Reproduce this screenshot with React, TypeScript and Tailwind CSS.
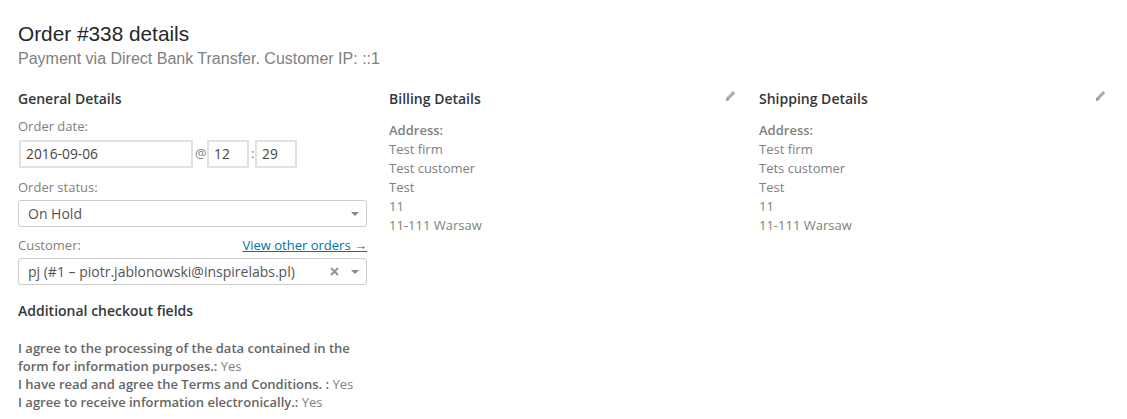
const openSans = 'font-["Open_Sans",sans-serif]'

function Caret() {
  return <span className="h-0 w-0 border-x-[4px] border-t-[4px] border-x-transparent border-t-[#888]" />
}

function ClearIcon() {
  return (
    <svg width="9" height="9" viewBox="0 0 9 9" className="mr-[12px]">
      <path d="M1 1 8 8M8 1 1 8" stroke="#999" strokeWidth="2.2" />
    </svg>
  )
}

function Pencil() {
  return (
    <svg width="11" height="12" viewBox="0 0 11 12" className="mt-[-5px]">
      <path d="M7.8 1 10.2 3.2 3.8 10 0.8 11 1.4 7.8Z" fill="#9a9a9a" />
      <path d="M2.6 7.6 8 2.1M4 9 9.2 3.5" stroke="#e8e8e8" strokeWidth="0.7" />
      <path d="M0.8 11 1.4 7.8 3.8 10Z" fill="#b89a78" />
    </svg>
  )
}

function TextInput({ value, className }: { value: string; className: string }) {
  return (
    <div className={`flex h-[28px] items-center border-2 border-[#e2e2e2] pl-[5px] text-[13.8px] text-[#444] ${className}`}>
      {value}
    </div>
  )
}

function SelectBox({ value, clearable }: { value: string; clearable?: boolean }) {
  return (
    <div className="flex h-[27px] items-center rounded-[3px] border border-[#cdcdcd] pl-[9px] pr-[7px] text-[14px] text-[#555]">
      <span className="flex-1">{value}</span>
      {clearable && <ClearIcon />}
      <Caret />
    </div>
  )
}

function AddressColumn({ title, customer }: { title: string; customer: string }) {
  return (
    <div className="pr-[23px]">
      <div className="flex h-[20px] items-center justify-between">
        <h3 className="text-[14px] font-semibold text-[#32373c]">{title}</h3>
        <Pencil />
      </div>
      <div className="mt-[13px] text-[13px] leading-[19px] text-[#808080]">
        <p className="font-semibold">Address:</p>
        <p>Test firm</p>
        <p>{customer}</p>
        <p>Test</p>
        <p>11</p>
        <p>11-111 Warsaw</p>
      </div>
    </div>
  )
}

export default function App() {
  return (
    <div className={`h-[419px] overflow-hidden bg-white pl-[18px] pt-[21px] ${openSans}`}>
      <h2 className='font-["Liberation_Sans",sans-serif] text-[20.8px] leading-[26px] text-[#23282d]'>Order #338 details</h2>
      <p className='font-["Liberation_Sans",sans-serif] text-[16px] leading-[23px] text-[#808080]'>
        Payment via Direct Bank Transfer. Customer IP: ::1
      </p>

      <div className="mt-[18px] grid grid-cols-[371px_370px_370px]">
        <div className="pr-[22px]">
          <h3 className="mt-[1px] h-[20px] text-[14px] leading-[20px] font-semibold text-[#32373c]">General Details</h3>

          <p className="mt-[8px] text-[13px] leading-[18px] text-[#808080]">Order date:</p>
          <div className="mt-[5px] ml-[1px] flex items-center text-[13px] text-[#808080]">
            <TextInput value="2016-09-06" className="w-[174px]" />
            <span className="w-[14px] pl-[2px]">@</span>
            <TextInput value="12" className="w-[42px]" />
            <span className="w-[6px] pl-[2px]">:</span>
            <TextInput value="29" className="w-[42px]" />
          </div>

          <p className="mt-[10px] mb-[4px] text-[13px] leading-[18px] text-[#808080]">Order status:</p>
          <SelectBox value="On Hold" />

          <div className="mt-[9px] mb-[4px] flex justify-between text-[13px] leading-[18px]">
            <span className="text-[#808080]">Customer:</span>
            <a className="text-[#0073aa] underline">View other orders →</a>
          </div>
          <SelectBox value="pj (#1 – piotr.jablonowski@inspirelabs.pl)" clearable />

          <h3 className="mt-[16px] text-[14px] leading-[20px] font-semibold text-[#32373c]">Additional checkout fields</h3>
          <div className="mt-[18px] text-[13px] leading-[18px] text-[#808080]">
            <p><strong className="font-semibold text-[#666]">I agree to the processing of the data contained in the form for information purposes.:</strong> Yes</p>
            <p><strong className="font-semibold text-[#666]">I have read and agree the Terms and Conditions. :</strong> Yes</p>
            <p><strong className="font-semibold text-[#666]">I agree to receive information electronically.:</strong> Yes</p>
          </div>
        </div>

        <AddressColumn title="Billing Details" customer="Test customer" />
        <AddressColumn title="Shipping Details" customer="Tets customer" />
      </div>
    </div>
  )
}
